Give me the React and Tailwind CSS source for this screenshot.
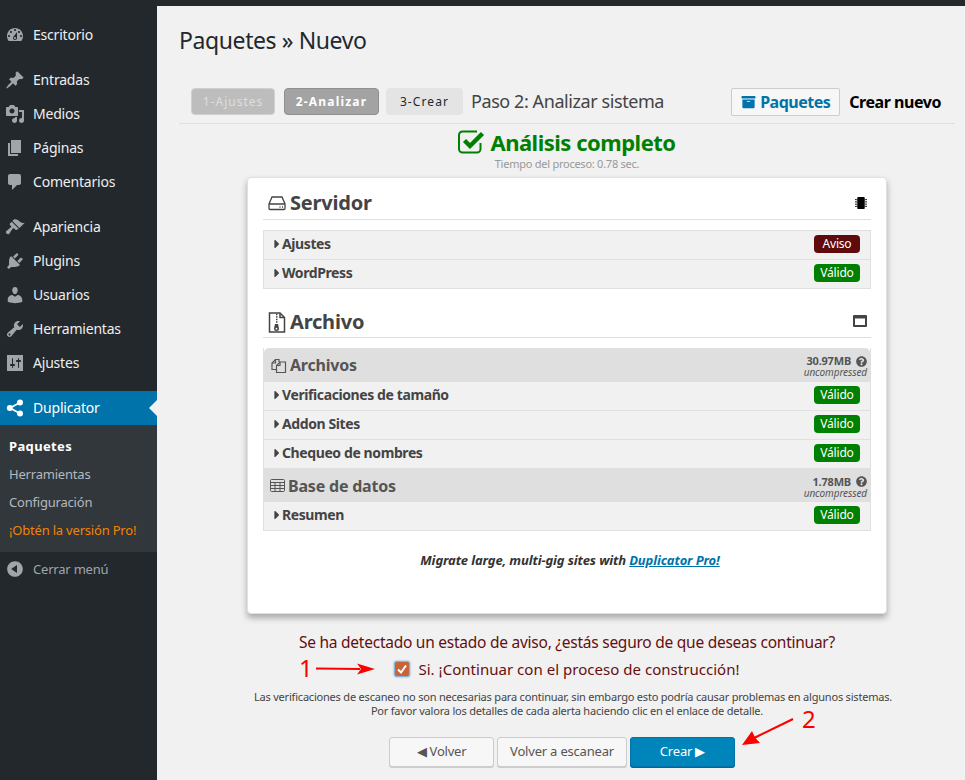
import React from "react";
import { FaArchive, FaMicrochip, FaQuestionCircle, FaCaretRight } from "react-icons/fa";

const Dash = ({ d }) => (
  <svg viewBox="0 0 20 20" className="w-5 h-5 fill-[#a0a5aa] shrink-0"><path d={d} /></svg>
);
const P = {
  dash: "M3.76 16h12.48c1.1-1.37 1.76-3.11 1.76-5 0-4.42-3.58-8-8-8s-8 3.58-8 8c0 1.89.66 3.63 1.76 5zM10 4c.55 0 1 .45 1 1s-.45 1-1 1-1-.45-1-1 .45-1 1-1zM6 6c.55 0 1 .45 1 1s-.45 1-1 1-1-.45-1-1 .45-1 1-1zm8 0c.55 0 1 .45 1 1s-.45 1-1 1-1-.45-1-1 .45-1 1-1zm-5.37 5.55L12 7v6c0 1.1-.9 2-2 2s-2-.9-2-2c0-.57.24-1.08.63-1.45zM4 10c.55 0 1 .45 1 1s-.45 1-1 1-1-.45-1-1 .45-1 1-1zm12 0c.55 0 1 .45 1 1s-.45 1-1 1-1-.45-1-1 .45-1 1-1zm-5 3c0-.55-.45-1-1-1s-1 .45-1 1 .45 1 1 1 1-.45 1-1z",
  post: "M10.44 3.02l1.82-1.82 6.36 6.35-1.83 1.82c-1.05-.68-2.48-.57-3.41.36l-.75.75c-.92.93-1.04 2.35-.35 3.41l-1.83 1.82-2.41-2.41-2.8 2.79c-.42.42-3.38 2.71-3.8 2.29s1.86-3.39 2.28-3.81l2.79-2.79L4.1 9.36l1.83-1.82c1.05.69 2.48.57 3.4-.36l.75-.75c.93-.92 1.05-2.35.36-3.41z",
  media: "M13 11V4c0-.55-.45-1-1-1h-1.67L9 1H5L3.67 3H2c-.55 0-1 .45-1 1v7c0 .55.45 1 1 1h10c.55 0 1-.45 1-1zM7 4.5c1.38 0 2.5 1.12 2.5 2.5S8.38 9.5 7 9.5 4.5 8.38 4.5 7 5.62 4.5 7 4.5zM14 6h5v10.5c0 1.38-1.12 2.5-2.5 2.5S14 17.88 14 16.5s1.12-2.5 2.5-2.5c.17 0 .34.02.5.05V8h-3V6zm-4 8.05V13h2v3.5c0 1.38-1.12 2.5-2.5 2.5S7 17.88 7 16.5 8.12 14 9.5 14c.17 0 .34.02.5.05z",
  page: "M6 15V2h10v13H6zm-1 1h8v2H3V5h2v11z",
  comments: "M5 2h9c1.1 0 2 .9 2 2v7c0 1.1-.9 2-2 2h-2l-5 5v-5H5c-1.1 0-2-.9-2-2V4c0-1.1.9-2 2-2z",
  appearance: "M14.48 11.06L7.41 3.99l1.5-1.5c.5-.56 2.3-.47 3.51.32 1.21.8 1.43 1.28 2.91 2.1 1.18.64 2.45 1.26 4.45.85zm-.71.71L6.7 4.7 4.93 6.47c-.39.39-.39 1.02 0 1.41l1.06 1.06c.39.39.39 1.03 0 1.42-.6.6-1.43 1.11-2.21 1.69-.35.26-.7.53-1.01.84C1.43 13.23.4 14.89 1.1 16c.44.7 1.4 1.6 2.9.9 1.11-.7 1.37-2.12 2.2-3.08.58-.78 1.09-1.61 1.69-2.21.39-.39 1.03-.39 1.42 0l1.06 1.06c.39.39 1.02.39 1.41 0z",
  plugins: "M13.11 4.36L9.87 7.6 8 5.73l3.24-3.24c.35-.34 1.05-.2 1.56.32.52.51.66 1.21.31 1.55zm-8 1.77l.91-1.12 9.01 9.01-1.19.84c-.71.71-2.63 1.16-3.82 1.16H6.14L4.9 17.26c-.59.59-1.54.59-2.12 0-.59-.58-.59-1.53 0-2.12l1.24-1.24v-3.88c0-1.13.4-3.19 1.09-3.89zm7.26 3.97l3.24-3.24c.34-.35 1.04-.21 1.55.31.52.51.66 1.21.31 1.55l-3.24 3.25z",
  users: "M10 9.25c-2.27 0-2.73-3.44-2.73-3.44C7 4.02 7.82 2 9.97 2c2.16 0 2.98 2.02 2.71 3.81 0 0-.41 3.44-2.68 3.44zm0 2.57L12.72 10c2.39 0 4.52 2.33 4.52 4.53v2.49s-3.65 1.13-7.24 1.13c-3.65 0-7.24-1.13-7.24-1.13v-2.49c0-2.25 1.94-4.48 4.47-4.48z",
  tools: "M16.68 9.77c-1.34 1.34-3.3 1.67-4.95.99l-5.41 6.52c-.99.99-2.59.99-3.58 0s-.99-2.59 0-3.57l6.52-5.42c-.68-1.65-.35-3.61.99-4.95 1.28-1.28 3.12-1.62 4.72-1.06l-2.89 2.89 2.82 2.82 2.86-2.87c.53 1.58.18 3.39-1.08 4.65zM3.81 16.21c.4.39 1.04.39 1.43 0 .4-.4.4-1.04 0-1.43-.39-.4-1.03-.4-1.43 0-.39.39-.39 1.03 0 1.43z",
  settings: "M18 18V2H2v16h16zM8 11h1c.55 0 1 .45 1 1s-.45 1-1 1H8v1.5c0 .28-.22.5-.5.5s-.5-.22-.5-.5V13H6c-.55 0-1-.45-1-1s.45-1 1-1h1V5.5c0-.28.22-.5.5-.5s.5.22.5.5V11zm5-2h-1c-.55 0-1-.45-1-1s.45-1 1-1h1V5.5c0-.28.22-.5.5-.5s.5.22.5.5V7h1c.55 0 1 .45 1 1s-.45 1-1 1h-1v5.5c0 .28-.22.5-.5.5s-.5-.22-.5-.5V9z",
  collapse: "M10 2.16c4.33 0 7.84 3.51 7.84 7.84s-3.51 7.84-7.84 7.84S2.16 14.33 2.16 10 5.71 2.16 10 2.16zm2 11.72V6.12L6.18 9.97z",
};

const MenuItem = ({ icon, label }) => (
  <div className="h-[34px] flex items-center pl-[5px] gap-[8px] text-[14px] text-[#eeeeee]">
    <Dash d={icon} />
    <span className="pb-[2px]">{label}</span>
  </div>
);

const Badge = ({ warn }) => (
  <span className={`w-[46px] h-[18px] rounded-[4px] flex items-center justify-center text-[12px] text-white ${warn ? "bg-[#5f0b0b]" : "bg-[#008000]"}`}>
    {warn ? "Aviso" : "Válido"}
  </span>
);

const Row = ({ label, warn }) => (
  <div className="h-[29px] flex items-center justify-between pl-[8px] pr-[10px] pb-[2px] bg-[#f1f1f1] border-b border-[#dfdfdf]">
    <span className="flex items-center text-[14px] font-bold text-[#444444] tracking-[-0.4px]">
      <FaCaretRight className="w-[10px] h-[14px] text-[#444444]" />
      <span className="pb-[2px]">{label}</span>
    </span>
    <Badge warn={warn} />
  </div>
);

const Heading = ({ icon, label, right, low }) => (
  <div className="h-[33px] flex items-center justify-between border-b border-[#dfdfdf] text-[#444444] pr-[4px] pl-[5px]">
    <span className={`flex items-center gap-[4px] text-[20px] font-bold ${low ? "pt-[2px]" : ""}`}>
      {icon}
      {label}
    </span>
    {right}
  </div>
);

const GroupHead = ({ icon, label, size, top }) => (
  <div className={`bg-[#dfdfdf] flex items-center justify-between pl-[6px] pr-[3px] ${top ? "h-[34px] rounded-t-[5px]" : "h-[33px]"}`}>
    <span className="flex items-center gap-[3px] text-[16px] font-bold text-[#555555]">
      {icon}
      {label}
    </span>
    <span className="flex flex-col items-end pt-[3px]">
      <span className="flex items-center gap-[5px] text-[11px] leading-[12px] font-bold text-[#555555]">
        {size}
        <FaQuestionCircle className="w-[11px] h-[11px] text-[#555555]" />
      </span>
      <span className="text-[10px] leading-[11px] italic text-[#555555] tracking-[-0.1px]">uncompressed</span>
    </span>
  </div>
);

const HddIcon = () => (
  <svg viewBox="0 0 18 16" className="w-[18px] h-[16px] fill-none stroke-[#444444] stroke-[1.3]">
    <path d="M1 9L4 2H14L17 9V13.5A1 1 0 0 1 16 14.5H2A1 1 0 0 1 1 13.5ZM1 9H17" />
    <path d="M11.5 12H12.5M14 12H15" strokeWidth="1.4" />
  </svg>
);
const ZipIcon = () => (
  <svg viewBox="0 0 18 21" className="w-[18px] h-[21px] fill-none stroke-[#444444] stroke-[1.5]">
    <path d="M1.5 1H12L16.5 5.5V20H1.5Z" />
    <path d="M12 1V5.5H16.5" />
    <path d="M8 2.5H9.5M8 5H9.5M8 7.5H9.5M8 10H9.5" strokeWidth="1.3" />
    <path d="M7 12H10L11 16.5A2.3 2.3 0 1 1 6 16.5Z" fill="#444444" stroke="none" />
    <circle cx="8.5" cy="16.7" r="0.9" fill="#ffffff" stroke="none" />
  </svg>
);
const FilesIcon = () => (
  <svg viewBox="0 0 17 17" className="w-[17px] h-[17px] fill-none stroke-[#555555] stroke-[1.2]">
    <path d="M2 10.5V6L5.5 2.5H9V5" />
    <path d="M5.5 2.5V6H2" />
    <path d="M2 10.5V12.5H6" />
    <path d="M6.5 15.5V8.5L10 5H15.5V15.5Z" fill="#dfdfdf" />
    <path d="M10 5V8.5H6.5" />
  </svg>
);
const TableIcon = () => (
  <svg viewBox="0 0 15 13" className="w-[15px] h-[13px] fill-none stroke-[#555555] stroke-[1]">
    <rect x="0.5" y="0.5" width="14" height="12" rx="1" />
    <path d="M0.5 3.5H14.5M0.5 6.5H14.5M0.5 9.5H14.5M5 3.5V12.5M10 3.5V12.5" />
  </svg>
);
const WindowIcon = () => (
  <svg viewBox="0 0 14 12" className="w-[14px] h-[12px]">
    <rect x="0" y="0" width="14" height="12" rx="1" fill="#444444" />
    <rect x="2" y="3.5" width="10" height="6.5" fill="#ffffff" />
  </svg>
);
const CheckIcon = () => (
  <svg viewBox="0 0 28 24" className="w-[28px] h-[24px] fill-none">
    <path d="M22.5 13V19A3.5 3.5 0 0 1 19 22.5H4.5A3.5 3.5 0 0 1 1 19V5A3.5 3.5 0 0 1 4.5 1.5H19" stroke="#008000" strokeWidth="2" />
    <path d="M6.5 10.5L12 16L24.5 3.5" stroke="#008000" strokeWidth="4.4" />
  </svg>
);

export default function App() {
  return (
    <div className="relative w-[965px] h-[780px] overflow-hidden bg-[#f1f1f1] font-['Noto_Sans',sans-serif] tracking-[-0.2px]">
      <div className="h-[6px] bg-[#23282d]" />
      <div className="flex h-[774px]">
        <aside className="w-[157px] shrink-0 bg-[#23282d] pt-[12px]">
          <MenuItem icon={P.dash} label="Escritorio" />
          <div className="h-[11px]" />
          <MenuItem icon={P.post} label="Entradas" />
          <MenuItem icon={P.media} label="Medios" />
          <MenuItem icon={P.page} label="Páginas" />
          <MenuItem icon={P.comments} label="Comentarios" />
          <div className="h-[11px]" />
          <MenuItem icon={P.appearance} label="Apariencia" />
          <MenuItem icon={P.plugins} label="Plugins" />
          <MenuItem icon={P.users} label="Usuarios" />
          <MenuItem icon={P.tools} label="Herramientas" />
          <MenuItem icon={P.settings} label="Ajustes" />
          <div className="h-[11px]" />
          <div className="relative h-[34px] flex items-center pl-[5px] gap-[8px] bg-[#0073aa] text-[14px] text-white">
            <svg viewBox="0 0 20 20" className="w-5 h-5 shrink-0 fill-white stroke-white">
              <path d="M5 10L15 4.5M5 10l10 5.5" strokeWidth="1.8" fill="none" />
              <circle cx="4.8" cy="10" r="3" stroke="none" />
              <circle cx="15" cy="4.5" r="3" stroke="none" />
              <circle cx="15" cy="15.5" r="3" stroke="none" />
            </svg>
            <span className="pb-[2px]">Duplicator</span>
            <span className="absolute right-0 top-[9px] w-0 h-0 border-y-[8px] border-y-transparent border-r-[8px] border-r-[#f1f1f1]" />
          </div>
          <div className="h-[127px] bg-[#32373c] pt-[8px] text-[13px]">
            <div className="h-[28px] flex items-center pl-[9px] font-bold text-white tracking-[0.35px]">Paquetes</div>
            <div className="h-[28px] flex items-center pl-[9px] text-[#b4b9be]">Herramientas</div>
            <div className="h-[28px] flex items-center pl-[9px] text-[#b4b9be]">Configuración</div>
            <div className="h-[28px] flex items-center pl-[9px] text-[#f18500]">¡Obtén la versión Pro!</div>
          </div>
          <div className="h-[34px] flex items-center pl-[5px] gap-[8px] text-[13px] text-[#a0a5aa]">
            <Dash d={P.collapse} />
            <span className="pt-[2px]">Cerrar menú</span>
          </div>
        </aside>

        <main className="flex-1 pl-[22px] pr-[10px]">
          <h1 className="text-[23px] leading-[29px] text-[#23282d] pt-[20px] tracking-[-0.4px]">Paquetes » Nuevo</h1>

          <div className="flex items-center mt-[32px] h-[37px] border-b border-[#dfdfdf] pb-[7px] pl-[12px] pr-[14px]">
            <span className="w-[84px] h-[27px] rounded-[4px] bg-[#bdbdbd] border border-[#d0d0d0] flex items-center justify-center text-[12px] tracking-[1px] text-[#dedede]">1-Ajustes</span>
            <span className="ml-[9px] w-[95px] h-[27px] rounded-[4px] bg-[#a3a3a3] border border-[#8f8f8f] flex items-center justify-center text-[12px] font-bold tracking-[1.2px] text-white">2-Analizar</span>
            <span className="ml-[7px] w-[77px] h-[27px] rounded-[4px] bg-[#e4e4e4] flex items-center justify-center text-[12px] tracking-[1.1px] text-[#23282d]">3-Crear</span>
            <span className="ml-[8px] text-[18px] text-[#444444] tracking-[-0.42px]">Paso 2: Analizar sistema</span>
            <span className="ml-auto w-[109px] h-[28px] rounded-[2px] bg-[#f7f7f7] border border-[#cccccc] flex items-center justify-center gap-[4px] text-[16px] font-bold text-[#0073aa] tracking-[-0.5px]">
              <FaArchive className="w-[15px] h-[14px]" />
              Paquetes
            </span>
            <span className="ml-[9px] text-[16px] font-bold text-black tracking-[-0.45px]">Crear nuevo</span>
          </div>

          <div className="flex items-center justify-center gap-[4px] mt-[4px] h-[28px] text-[22px] font-bold text-[#008000] tracking-[-0.5px]">
            <CheckIcon />
            Análisis completo
          </div>
          <div className="text-center text-[11px] leading-[13px] text-[#999999] mt-[1px] tracking-[-0.25px]">Tiempo del proceso: 0.78 sec.</div>

          <div className="w-[640px] h-[437px] mx-auto mt-[7px] bg-white rounded-[4px] border border-[#e0e0e0] shadow-[0_4px_6px_rgba(0,0,0,0.3)] px-[15px] pt-[9px]">
            <Heading
              icon={<HddIcon />}
              label="Servidor"
              right={<FaMicrochip className="w-[12px] h-[14px] text-black" />}
            />
            <div className="mt-[10px] border-x border-t border-[#dfdfdf]">
              <Row label="Ajustes" warn />
              <Row label="WordPress" />
            </div>
            <div className="h-[16px]" />
            <Heading low icon={<ZipIcon />} label="Archivo" right={<WindowIcon />} />
            <div className="mt-[10px] border-x border-[#dfdfdf]">
              <GroupHead top icon={<FilesIcon />} label="Archivos" size="30.97MB" />
              <Row label="Verificaciones de tamaño" />
              <Row label="Addon Sites" />
              <Row label="Chequeo de nombres" />
              <GroupHead icon={<TableIcon />} label="Base de datos" size="1.78MB" />
              <Row label="Resumen" />
            </div>
            <p className="text-center text-[13px] font-bold italic text-[#333333] mt-[20px] pl-[6px] tracking-[-0.13px]">
              Migrate large, multi-gig sites with <span className="text-[#0073aa] underline">Duplicator Pro!</span>
            </p>
          </div>

          <p className="text-center text-[15.5px] leading-[22px] text-[#640f0f] mt-[17px] tracking-[-0.25px]">Se ha detectado un estado de aviso, ¿estás seguro de que deseas continuar?</p>
          <div className="flex items-center justify-center gap-[8px] h-[24px] mt-[4px] text-[15px] text-[#640f0f] tracking-[0.03px]">
            <span className="w-[16px] h-[16px] rounded-[3px] bg-[#c8633a] border border-[#8ab4d4] shadow-[0_0_2px_#5b9dd9] flex items-center justify-center">
              <svg viewBox="0 0 12 12" className="w-[12px] h-[12px] fill-none stroke-white stroke-[2]"><path d="M2 6.5L5 9.5L10 2.5" /></svg>
            </span>
            Si. ¡Continuar con el proceso de construcción!
          </div>
          <div className="text-center text-[11px] leading-[14px] text-[#444444] mt-[9px]">
            <p className="pl-[12px]">Las verificaciones de escaneo no son necesarias para continuar, sin embargo esto podría causar problemas en algunos sistemas.</p>
            <p>Por favor valora los detalles de cada alerta haciendo clic en el enlace de detalle.</p>
          </div>
          <div className="flex justify-center gap-[3px] mt-[19px] pr-[10px] text-[13px]">
            <span className="w-[105px] h-[30px] rounded-[3px] bg-[#f7f7f7] border border-[#cccccc] shadow-[0_1px_0_#cccccc] flex items-center justify-center text-[#555555]">◀ Volver</span>
            <span className="w-[130px] h-[30px] rounded-[3px] bg-[#f7f7f7] border border-[#cccccc] shadow-[0_1px_0_#cccccc] flex items-center justify-center text-[#555555]">Volver a escanear</span>
            <span className="w-[105px] h-[30px] rounded-[3px] bg-[#0085ba] border border-[#0073aa] shadow-[0_1px_0_#006799] flex items-center justify-center text-white">Crear ▶</span>
          </div>
        </main>
      </div>

      <span className="absolute left-[299px] top-[654px] text-[24px] leading-[28px] text-[#ff0000]">1</span>
      <svg className="absolute left-[315px] top-[661px] w-[62px] h-[16px]" viewBox="0 0 62 16">
        <path d="M1 7.5L45 8" stroke="#ff0000" strokeWidth="2.2" />
        <path d="M60 8L42 2.5L46 8L42 13.5Z" fill="#ff0000" />
      </svg>
      <span className="absolute left-[802px] top-[705px] text-[24px] leading-[28px] text-[#ff0000]">2</span>
      <svg className="absolute left-[740px] top-[716px] w-[56px] h-[32px]" viewBox="0 0 56 32">
        <path d="M53 3L12 23" stroke="#ff0000" strokeWidth="2.2" />
        <path d="M2 29L20 27L15 21.5L12 15Z" fill="#ff0000" />
      </svg>
    </div>
  );
}
